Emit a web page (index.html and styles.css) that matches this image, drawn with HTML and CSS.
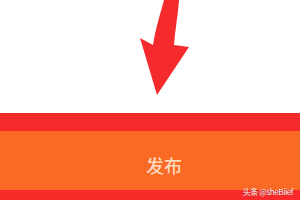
FILE: index.html
```html
<!DOCTYPE html>
<html>
<head>
<meta charset="utf-8">
<link rel="stylesheet" href="styles.css">
</head>
<body>
<div class="page">
  <div class="top">
    <svg class="arrow" width="300" height="113" viewBox="0 0 300 113">
      <path d="M164 0 L179 0 C178 15 175 30 174 45 L189 47 L157 95 L140 38 L153 45 C155 30 160 15 164 0 Z" fill="#f52a2c"/>
    </svg>
  </div>
  <div class="band-red"></div>
  <div class="band-orange"><span class="label">发布</span></div>
  <div class="band-red-bottom"></div>
  <div class="watermark">头条 @sheBiief</div>
</div>
</body>
</html>
```
FILE: styles.css
```css
html, body {
  margin: 0;
  padding: 0;
  background: #ffffff;
}
.page {
  position: relative;
  width: 300px;
  height: 200px;
  display: flex;
  flex-direction: column;
  overflow: hidden;
  font-family: "Noto Sans CJK SC", "Noto Sans", sans-serif;
}
.top {
  height: 113px;
  flex: none;
}
.arrow {
  display: block;
}
.band-red {
  height: 18px;
  flex: none;
  background: #f52a2a;
}
.band-orange {
  height: 59px;
  flex: none;
  background: #fb6a24;
  display: flex;
  align-items: center;
  justify-content: center;
}
.label {
  color: #fcd9bd;
  font-size: 18px;
  font-weight: 500;
  line-height: 1;
  margin-left: 28px;
  margin-top: 8px;
}
.band-red-bottom {
  flex: 1;
  background: #f82a2a;
}
.watermark {
  position: absolute;
  right: 7px;
  bottom: 4px;
  font-size: 8px;
  letter-spacing: -0.4px;
  line-height: 1;
  color: #ffffff;
  text-shadow: 0 0 1px rgba(0,0,0,0.4);
}
```
